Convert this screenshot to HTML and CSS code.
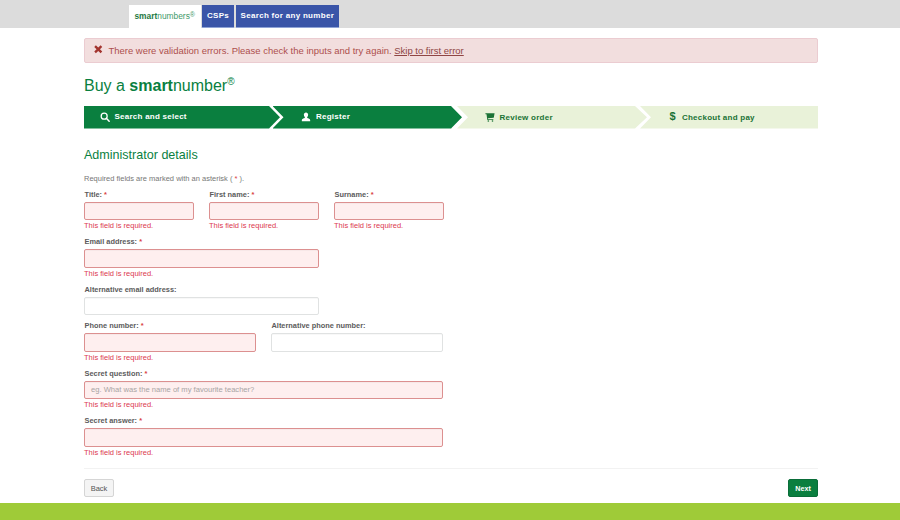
FILE: index.html
```html
<!DOCTYPE html>
<html lang="en">
<head>
<meta charset="utf-8">
<title>Buy a smartnumber</title>
<link rel="stylesheet" href="styles.css">
</head>
<body>
<header class="topbar">
  <nav class="tabs">
    <a class="tab tab-logo"><b>smart</b>numbers<sup>®</sup></a>
    <a class="tab tab-blue">CSPs</a>
    <a class="tab tab-blue">Search for any number</a>
  </nav>
</header>
<main class="page">
  <div class="alert">
    <svg class="alert-icon" viewBox="0 0 10 10"><path d="M2.2 0.4 5 3 7.8 0.4 9.7 2.3 7 5 9.7 7.7 7.8 9.6 5 7 2.2 9.6 0.3 7.7 3 5 0.3 2.3Z"/></svg>
    <span>There were validation errors. Please check the inputs and try again. <a class="alert-link">Skip to first error</a></span>
  </div>
  <h1 class="title">Buy a <b>smart</b>number<sup>®</sup></h1>
  <ol class="steps">
    <li class="step step-done step-first">
      <svg class="step-icon" viewBox="0 0 12 12"><circle cx="5" cy="5" r="3.6" fill="none" stroke="currentColor" stroke-width="1.5"/><path d="M7.6 7.6 11 11" stroke="currentColor" stroke-width="1.8" stroke-linecap="round"/></svg>
      <span>Search and select</span>
    </li>
    <li class="step step-done step-second">
      <svg class="step-icon" viewBox="0 0 12 12"><path fill="currentColor" d="M6 0.5C7.6 0.5 8.6 1.8 8.6 3.4 8.6 4.6 8.1 5.6 7.4 6.2V7.2C8.8 7.8 11 8.2 11 9.6V11H1V9.6C1 8.2 3.2 7.8 4.6 7.2V6.2C3.9 5.6 3.4 4.6 3.4 3.4 3.4 1.8 4.4 0.5 6 0.5Z"/></svg>
      <span>Register</span>
    </li>
    <li class="step step-todo step-third">
      <svg class="step-icon" viewBox="0 0 12 12"><path fill="currentColor" d="M0.5 1.5H11.5L10.5 6.8 3.6 7.6 3.8 8.6H10V9.6H2.8L1.8 2.8H0.5Z"/><circle cx="4" cy="10.8" r="1" fill="currentColor"/><circle cx="9" cy="10.8" r="1" fill="currentColor"/></svg>
      <span>Review order</span>
    </li>
    <li class="step step-todo step-fourth">
      <span class="dollar">$</span>
      <span>Checkout and pay</span>
    </li>
  </ol>
  <h2 class="section">Administrator details</h2>
  <p class="note">Required fields are marked with an asterisk ( <em>*</em> ).</p>
  <form class="form">
    <div class="row row-three">
      <div class="field"><label>Title: <em>*</em></label><div class="input bad"></div><small>This field is required.</small></div>
      <div class="field"><label>First name: <em>*</em></label><div class="input bad"></div><small>This field is required.</small></div>
      <div class="field"><label>Surname: <em>*</em></label><div class="input bad"></div><small>This field is required.</small></div>
    </div>
    <div class="row row-email">
      <div class="field"><label>Email address: <em>*</em></label><div class="input bad"></div><small>This field is required.</small></div>
    </div>
    <div class="row row-email">
      <div class="field"><label>Alternative email address:</label><div class="input"></div></div>
    </div>
    <div class="row row-two">
      <div class="field"><label>Phone number: <em>*</em></label><div class="input bad"></div><small>This field is required.</small></div>
      <div class="field"><label>Alternative phone number:</label><div class="input"></div></div>
    </div>
    <div class="row row-full">
      <div class="field"><label>Secret question: <em>*</em></label><div class="input bad placeholder">eg. What was the name of my favourite teacher?</div><small>This field is required.</small></div>
    </div>
    <div class="row row-full">
      <div class="field"><label>Secret answer: <em>*</em></label><div class="input bad"></div><small>This field is required.</small></div>
    </div>
  </form>
  <div class="actions">
    <a class="btn btn-back">Back</a>
    <a class="btn btn-next">Next</a>
  </div>
</main>
<footer class="footer"></footer>
</body>
</html>
```
FILE: styles.css
```css
* { box-sizing: border-box; }
html, body { margin: 0; height: 520px; overflow: hidden; }
body {
  display: flex;
  flex-direction: column;
  background: #fff;
  font-family: "Liberation Sans", Arial, sans-serif;
  color: #333;
}
.topbar { height: 27.5px; flex: none; background: #dcdcdc; padding: 5px 0 0 129px; }
.tabs { display: flex; gap: 1.5px; height: 22.5px; }
.tab {
  display: flex;
  align-items: center;
  font-weight: 700;
  font-size: 8px;
  letter-spacing: 0.3px;
}
.tab-logo {
  width: 71.5px;
  background: #fff;
  justify-content: center;
  font-weight: 400;
  color: #3f9a6a;
  letter-spacing: 0;
  font-size: 8.4px;
}
.tab-logo b { color: #1f7a45; }
.tab-logo sup { font-size: 7px; line-height: 0; position: relative; top: -1px; vertical-align: super; }
.tab-blue { background: #3a55a8; color: #fff; padding: 0 5px; border-bottom: 1px solid #8fa3d6; }
.page { flex: 1; min-height: 0; width: 734px; margin-left: 84px; display: flex; flex-direction: column; }
.alert {
  margin-top: 10.5px;
  height: 25px;
  display: flex;
  align-items: center;
  gap: 6px;
  padding: 0 9px;
  background: #f2dede;
  border: 1px solid #ebccd1;
  border-radius: 2px;
  color: #ad4f4d;
  font-size: 9.47px;
}
.alert-icon { width: 8.5px; height: 8.5px; fill: #a3352f; flex: none; position: relative; top: -1px; }
.alert-link { color: #8f4544; text-decoration: underline; }
.title {
  margin: 13px 0 0;
  font-size: 16px;
  line-height: 20px;
  font-weight: 400;
  color: #0a7f3f;
}
.title b { font-weight: 700; }
.title sup { font-size: 10px; line-height: 0; vertical-align: 6px; }
.steps {
  list-style: none;
  margin: 10px 0 0;
  padding: 0;
  height: 22.5px;
  display: flex;
  font-size: 8px;
  font-weight: 700;
  letter-spacing: 0.25px;
}
.step {
  display: flex;
  align-items: center;
  height: 100%;
  flex: none;
}
.step-done { background: #0a7f3f; color: #fff; border-bottom: 1px solid #7fc09c; }
.step-todo { background: #e9f2d9; color: #1b7336; }
.step-first {
  width: 196px; padding-left: 15.5px;
  clip-path: polygon(0 0, 185px 0, 100% 50%, 185px 100%, 0 100%);
}
.step-second {
  width: 189.5px; padding-left: 28.5px;
  margin-left: -7.5px;
  clip-path: polygon(0 0, 178.5px 0, 100% 50%, 178.5px 100%, 0 100%, 11px 50%);
}
.step-third {
  width: 190px; padding-left: 27.5px;
  margin-left: -5px;
  clip-path: polygon(0 0, 178px 0, 100% 50%, 178px 100%, 0 100%, 11px 50%);
}
.step-fourth {
  flex: 1; padding-left: 29.5px;
  margin-left: -7px;
  clip-path: polygon(0 0, 100% 0, 100% 100%, 0 100%, 11px 50%);
}
.step-icon { width: 10px; height: 10px; margin-right: 5px; flex: none; }
.dollar { font-size: 11px; margin-right: 6px; position: relative; top: -1px; }
.section {
  margin: 19.5px 0 0;
  font-size: 12.55px;
  line-height: 15px;
  font-weight: 400;
  color: #0a7f3f;
}
.note { margin: 10.5px 0 0; font-size: 7.5px; line-height: 10px; color: #777; }
.note em, label em { font-style: normal; color: #d9413e; }
.form { width: 359px; margin-top: 6px; display: flex; flex-direction: column; }
.row { display: grid; column-gap: 15px; margin-bottom: 6px; }
.row-three { grid-template-columns: 110px 110px 109.5px; }
.row-email { grid-template-columns: 234.5px; }
.row-two { grid-template-columns: 172px 172px; }
.row-full { grid-template-columns: 1fr; }
.field { display: flex; flex-direction: column; }
label { font-size: 7.4px; line-height: 10px; font-weight: 700; color: #5c5c5c; padding-left: 0.5px; }
.input {
  height: 18.5px;
  margin-top: 2px;
  border: 1px solid #e0e2e2;
  border-radius: 2px;
  background: #fff;
  box-shadow: inset 0 1px 1px rgba(0,0,0,.03);
}
.input.bad { background: #feefef; border-color: #dc9090; }
.placeholder { display: flex; align-items: center; padding-left: 6px; font-size: 7.6px; color: #a8a4a4; }
small { font-size: 7.5px; line-height: 10px; color: #dc3a50; margin-top: 1px; }
.actions {
  margin-top: 4.5px;
  padding-top: 10px;
  border-top: 1px solid #f2f2f2;
  display: flex;
  justify-content: space-between;
}
.btn {
  height: 18px;
  display: flex;
  align-items: center;
  justify-content: center;
  border-radius: 2px;
  font-size: 7.5px;
}
.btn-back { width: 30px; color: #555; background: #f4f4f4; border: 1px solid #d5d5d5; }
.btn-next { width: 30px; color: #fff; font-size: 7.2px; font-weight: 700; background: #0a7f3f; border: 1px solid #0a6d39; }
.footer { height: 17px; flex: none; background: #9fcb38; }
```
